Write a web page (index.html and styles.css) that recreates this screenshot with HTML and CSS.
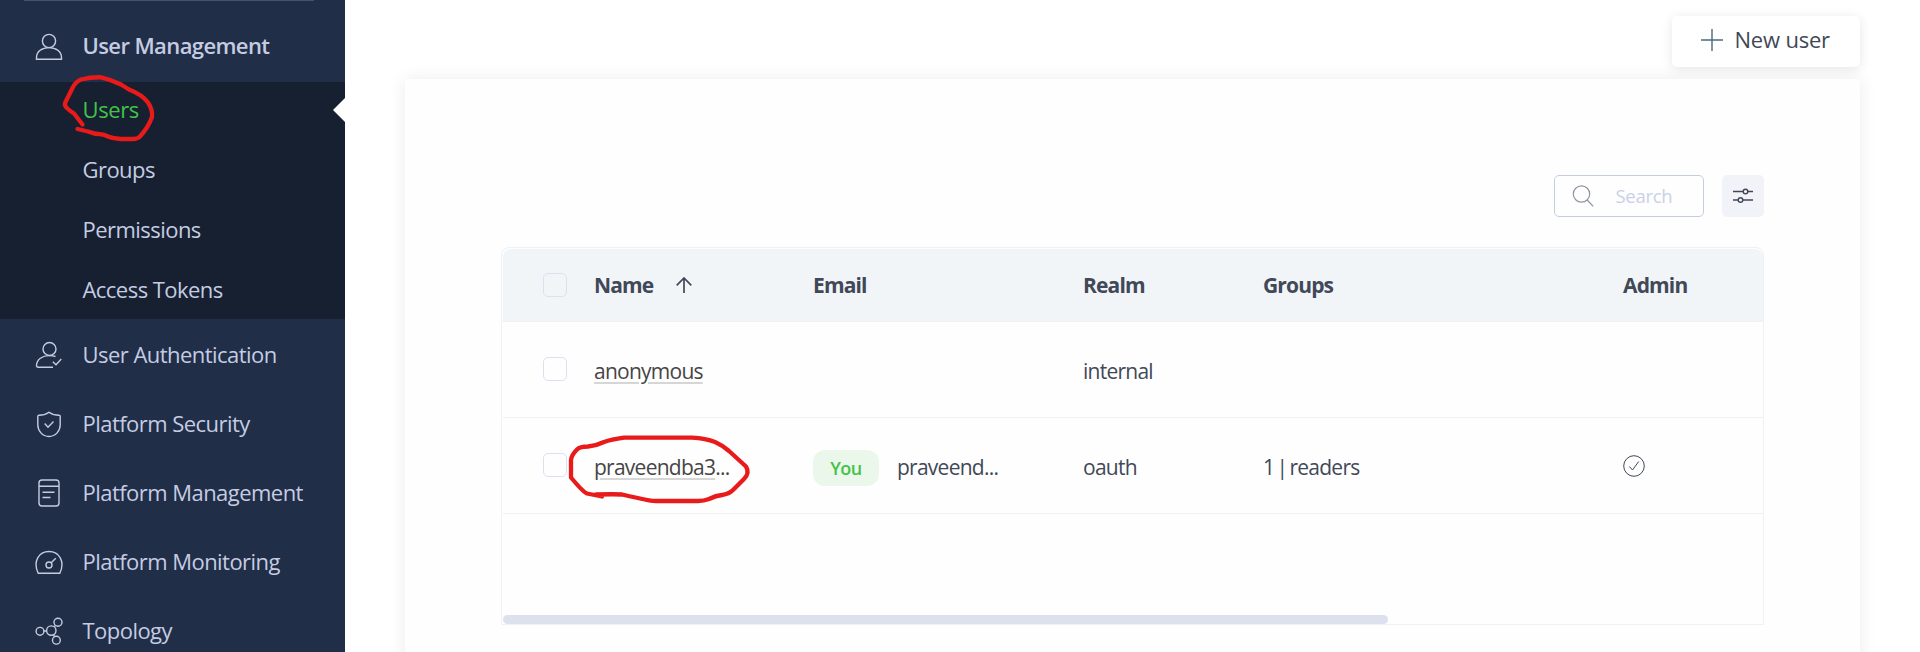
FILE: index.html
```html
<!DOCTYPE html>
<html lang="en">
<head>
<meta charset="utf-8">
<title>User Management</title>
<link rel="stylesheet" href="styles.css">
</head>
<body>
<div class="app">
  <aside class="sidebar">
    <div class="divider"></div>
    <nav class="nav">
      <a class="item current"><svg class="icon" viewBox="0 0 28 28"><circle cx="14" cy="8" r="6.6"/><path d="M1.5 26.3v-1.8C1.5 18.5 7 14.6 14 14.6s12.500 3.900 12.500 9.900v1.800z"/></svg><span>User Management</span></a>
      <div class="submenu">
        <a class="sub active"><span>Users</span></a>
        <a class="sub"><span>Groups</span></a>
        <a class="sub"><span>Permissions</span></a>
        <a class="sub"><span>Access Tokens</span></a>
      </div>
      <a class="item"><svg class="icon" viewBox="0 0 28 28"><circle cx="14.500" cy="8" r="6.500"/><path d="M18 26.300H3.200c-1.200 0-1.700-.8-1.700-2 .2-6 6-9.700 12.500-9.700 2.400 0 4.600.1 6.500.9M17.800 20.800l3.200 3 5.300-5.700"/></svg><span>User Authentication</span></a>
      <a class="item"><svg class="icon" viewBox="0 0 28 28"><path d="M14 2.200c2.800 2 6.500 3.100 10 3.100.7 0 1.200.5 1.200 1.200v8.300c0 6-4.500 11.700-11.200 11.700S2.800 20.800 2.800 14.800V6.500c0-.7.500-1.200 1.200-1.200 3.500 0 7.200-1.100 10-3.100zM9.700 13.500l3.300 3.700 5.500-5.700"/></svg><span>Platform Security</span></a>
      <a class="item"><svg class="icon" viewBox="0 0 28 28"><rect x="4" y="1" width="20" height="26" rx="3"/><path d="M4 7.300h20M7.500 13.200h12M7.500 18.500h8"/></svg><span>Platform Management</span></a>
      <a class="item"><svg class="icon" viewBox="0 0 28 28"><path d="M3.200 25.300C-2.500 13 4 3.500 14 3.500S30.500 13 24.800 25.300z"/><circle cx="14" cy="17" r="3"/><path d="M16.200 14.800l4.600-4.600"/></svg><span>Platform Monitoring</span></a>
      <a class="item"><svg class="icon" viewBox="0 0 28 28"><circle cx="5" cy="14.300" r="3.900"/><circle cx="16.300" cy="13.600" r="4.700"/><circle cx="23" cy="5.300" r="4"/><circle cx="21.400" cy="23.200" r="3.900"/><path d="M8.900 14h2.700M19.200 9.900l1.300-1.500M18.500 17.800l1 1.800"/></svg><span>Topology</span></a>
    </nav>
  </aside>
  <main class="main">
    <div class="actions">
      <button class="new-user"><svg class="plus" viewBox="0 0 22 22"><path d="M11 0v22M0 11h22"/></svg><span>New user</span></button>
    </div>
    <section class="card">
      <div class="tools">
        <div class="search"><svg class="lens" viewBox="0 0 22 22"><circle cx="9.500" cy="9" r="8.200"/><path d="M15.200 15l6 6.300"/></svg><span>Search</span></div>
        <button class="filter"><svg class="sliders" viewBox="0 0 20 16"><path d="M0 3.500h10M15 3.500h5M0 12h5M10 12h10"/><circle cx="12.500" cy="3.500" r="2.300"/><circle cx="7.500" cy="12" r="2.300"/></svg></button>
      </div>
      <div class="table">
        <div class="row head">
          <i class="check"></i>
          <div class="cell"><span>Name</span><svg class="sort" viewBox="0 0 16 16"><path d="M8 16V1M.7 8.300L8 1l7.300 7.300"/></svg></div>
          <div class="cell">Email</div>
          <div class="cell">Realm</div>
          <div class="cell">Groups</div>
          <div class="cell">Admin</div>
        </div>
        <div class="row">
          <i class="check"></i>
          <div class="cell name"><span class="link">anonymous</span></div>
          <div class="cell"></div>
          <div class="cell">internal</div>
          <div class="cell"></div>
          <div class="cell"></div>
        </div>
        <div class="row">
          <i class="check"></i>
          <div class="cell name"><span class="link">praveendba3</span><span>...</span></div>
          <div class="cell"><span class="pill">You</span><span>praveend...</span></div>
          <div class="cell">oauth</div>
          <div class="cell">1 | readers</div>
          <div class="cell admin"><svg class="ok" viewBox="0 0 22 22"><circle cx="11" cy="11" r="10.300"/><path d="M6.300 11.500l3.200 3.500 6.200-8.500"/></svg></div>
        </div>
        <div class="scroll"><div class="thumb"></div></div>
      </div>
    </section>
  </main>
  <svg class="marks" viewBox="0 0 1920 652">
    <path d="M82.500 124.500L74 113.500Q68 109.500 66 107Q64 105 65.500 102L73 87Q76 81.500 81 79.500Q91 77 101 77.300Q111 79.500 121 84.500L129 89.500Q142 94.500 148 102.500Q153 110 152 117Q148.500 127 140 136.500Q137.500 139 133 139H121Q113 138.500 108 136.500Q104 134.500 100 134.200Q94 134 88 131.500L77.500 129"/>
    <path d="M602 496.500L587 493.500Q583 492 571 477.500V460Q571.500 455 577 449.500Q580 446.500 588 446.500Q597 445.500 604 442Q611 439.500 624 437.700H692Q706 438.500 715 442Q722 445 729 451L746 466.500Q750 473 744 479L733 490Q729 494 722 495Q716 495.500 709 499Q704 501 698 501H656Q650 501 640 498.500Q628 496 622 494.500Q615 494 596 494.500"/>
  </svg>
</div>
</body>
</html>
```
FILE: styles.css
```css
* { box-sizing: border-box; }
body { margin: 0; background: #fff; color: #414857; font-family: "Open Sans", "Noto Sans", sans-serif; font-size: 21px; }
button { border: 0; font: inherit; color: inherit; }
svg { display: block; fill: none; stroke: currentColor; flex: none; }
.app { position: relative; display: flex; width: 1920px; height: 652px; overflow: hidden; }
.sidebar { width: 345px; background: #202e48; color: #c5cce2; flex: none; overflow: hidden; }
.divider { height: 1px; margin: 0 31px 0 24px; background: #45536b; }
.nav { display: flex; flex-direction: column; padding-top: 11px; font-size: 22px; letter-spacing: -0.54px; }
.item { display: flex; align-items: center; height: 69px; padding-left: 35px; gap: 19.500px; flex: none; }
.item span, .sub span { padding-bottom: 2px; }
.current { font-weight: 600; height: 70px; letter-spacing: -0.6px; }
.item.current span { padding-bottom: 4px; }
.icon { width: 28px; height: 28px; stroke-width: 1.4; }
.current .icon { margin-top: -1px; }
.submenu { background: #162031; height: 237px; margin-bottom: 1px; }
.sub { display: flex; align-items: center; height: 60px; margin-top: -2px; margin-bottom: 2px; padding-left: 82.500px; position: relative; }
.active { color: #43c34a; font-weight: 500; letter-spacing: -0.4px; }
.active::after { content: ""; position: absolute; right: 0; top: 18px; border: 12px solid transparent; border-right-color: #fff; border-left: 0; }
.main { flex: 1; padding: 16px 60px 0; }
.actions { display: flex; justify-content: flex-end; }
.new-user { position: relative; z-index: 1; display: flex; align-items: center; gap: 11.500px; width: 188px; height: 51px; padding: 0 0 3px 29px; background: #fff; border-radius: 5px; box-shadow: 0 2px 12px rgba(0,0,0,.1); font-size: 22px; font-weight: 500; letter-spacing: -0.2px; }
.new-user span { padding-bottom: 2px; }
.plus { width: 22px; height: 22px; stroke-width: 1.4; color: #47697d; }
.card { height: 700px; margin-top: 12px; padding: 96px 96px 0; background: #fefefe; border-radius: 3px; box-shadow: 0 0 18px rgba(0,0,0,.08); }
.tools { display: flex; justify-content: flex-end; gap: 18px; }
.search { display: flex; align-items: center; gap: 22px; width: 150px; height: 42px; padding: 0 0 1px 16.500px; border: 1px solid #c5cde2; border-radius: 5px; color: #c9d1e6; font-size: 18.500px; letter-spacing: -0.3px; }
.lens { width: 22px; height: 22px; color: #9095a3; stroke-width: 1.200; }
.filter { display: grid; place-items: center; width: 42px; height: 42px; padding: 0; background: #f2f3f8; border-radius: 5px; }
.sliders { width: 20px; height: 16px; stroke-width: 1.400; }
.table { width: 1263px; height: 378px; margin-top: 30px; border: 1px solid #f0f1f4; border-radius: 8px 8px 0 0; padding: 1px 0 0 1px; display: flex; flex-direction: column; }
.row { display: grid; grid-template-columns: 51px 219px 270px 180px 360px 1fr; align-items: center; height: 96px; padding-left: 40px; border-bottom: 1px solid #f0f1f4; flex: none; }
.head { height: 73px; background: #f2f5f8; border-radius: 8px 8px 0 0; font-weight: 700; letter-spacing: -0.85px; }
.check { width: 24px; height: 24px; border: 1px solid #dfe0ef; border-radius: 5px; }
.row:not(.head) .check { margin-top: -2px; }
.row:not(.head) .cell { padding-top: 3px; letter-spacing: -0.75px; word-spacing: -2.500px; }
.row:not(.head) .name { padding-top: 2px; color: #454545; }
.row:not(.head) .admin { padding-top: 0; }
.cell { display: flex; align-items: center; white-space: nowrap; }
.sort { width: 16px; height: 16px; margin-left: 23px; stroke-width: 1.700; }
.link { line-height: 24px; text-decoration: underline 2px #d6d6d6; text-underline-offset: 2.500px; }
.pill { width: 66px; height: 36px; line-height: 36px; margin-right: 18px; text-align: center; background: #ebf7eb; border-radius: 12px; color: #43c34a; font-size: 18px; font-weight: 600; letter-spacing: -0.5px; margin-top: 2px; }
.ok { width: 22px; height: 22px; }
.scroll { margin-top: auto; height: 9px; }
.thumb { width: 885px; height: 9px; background: #dde1ee; border-radius: 4.500px; }
.marks { position: absolute; inset: 0; width: 1920px; height: 652px; stroke: #e81a1a; stroke-width: 4.300; stroke-linecap: round; stroke-linejoin: round; pointer-events: none; }
```
